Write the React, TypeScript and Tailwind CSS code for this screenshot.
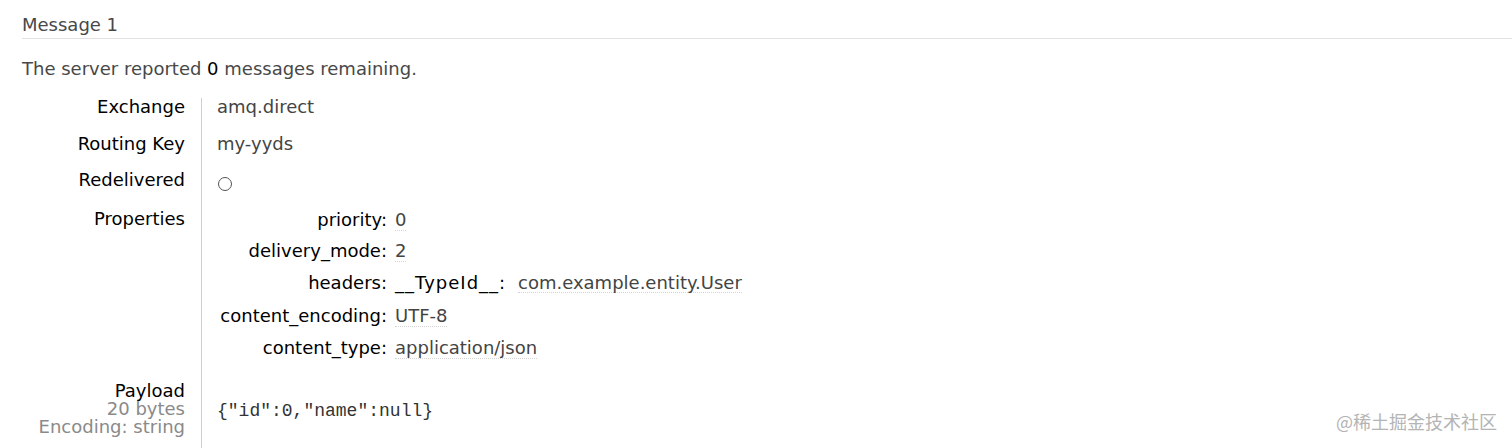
import React from "react";

const Row = ({
  label,
  h,
  children,
}: {
  label: React.ReactNode;
  h: string;
  children: React.ReactNode;
}) => (
  <div className={`flex ${h}`}>
    <div className="w-[179px] shrink-0 pr-[16px] text-right text-black">{label}</div>
    <div className="flex-1 border-l border-[#cfcfcf] pl-[15px] text-[#444]">{children}</div>
  </div>
);

const Prop = ({ k, h, children }: { k: string; h: string; children: React.ReactNode }) => (
  <div className={`flex ${h}`}>
    <div className="w-[170px] shrink-0 text-right text-black">{k}</div>
    <div className="ml-[8px] text-[#444]">{children}</div>
  </div>
);

const Dotted = ({ children }: { children: React.ReactNode }) => (
  <span className="border-b border-dotted border-[#d4d4d4]">{children}</span>
);

export default function App() {
  return (
    <div className="relative h-[448px] overflow-hidden bg-white pl-[22px] pt-[16px] font-['DejaVu_Sans',sans-serif] text-[18px] leading-[18px]">
      <h3 className="border-b border-[#e2e2e2] pb-[4px] text-[#484848]">Message 1</h3>
      <p className="mt-[21px] text-[#484848]">
        The server reported <span className="text-black">0</span> messages remaining.
      </p>
      <div className="mt-[20px] flex flex-col">
        <Row label="Exchange" h="h-[37px]">amq.direct</Row>
        <Row label="Routing Key" h="h-[36px]">my-yyds</Row>
        <Row label="Redelivered" h="h-[39px]">
          <div className="mt-[6px] ml-[1px] h-[14px] w-[14px] rounded-full border border-[#555]"></div>
        </Row>
        <Row label="Properties" h="h-[161px]">
          <div className="pt-[1px]">
            <Prop k="priority:" h="h-[31px]">
              <Dotted>0</Dotted>
            </Prop>
            <Prop k="delivery_mode:" h="h-[32px]">
              <Dotted>2</Dotted>
            </Prop>
            <Prop k="headers:" h="h-[33px]">
              <div className="flex">
                <span className="w-[123px] shrink-0 tracking-[1px] text-black">__TypeId__:</span>
                <Dotted>com.example.entity.User</Dotted>
              </div>
            </Prop>
            <Prop k="content_encoding:" h="h-[32px]">
              <Dotted>UTF-8</Dotted>
            </Prop>
            <Prop k="content_type:" h="h-[32px]">
              <Dotted>application/json</Dotted>
            </Prop>
          </div>
        </Row>
        <div className="flex h-[200px]">
          <div className="w-[179px] shrink-0 pr-[16px] pt-[11px] text-right">
            <div className="text-black">Payload</div>
            <div className="text-[#8a8a8a]">20 bytes</div>
            <div className="text-[#8a8a8a]">Encoding: string</div>
          </div>
          <div className="flex-1 border-l border-[#cfcfcf] pl-[15px] pt-[31px]">
            <pre className="font-['Liberation_Mono',monospace] text-[18px] leading-[18px] text-[#333]">
              {'{"id":0,"name":null}'}
            </pre>
          </div>
        </div>
      </div>
      <div className="absolute right-[15px] top-[410px] font-['Noto_Sans_CJK_SC',sans-serif] text-[18px] leading-[22px] text-[#b4b4b4]">
        @稀土掘金技术社区
      </div>
    </div>
  );
}
